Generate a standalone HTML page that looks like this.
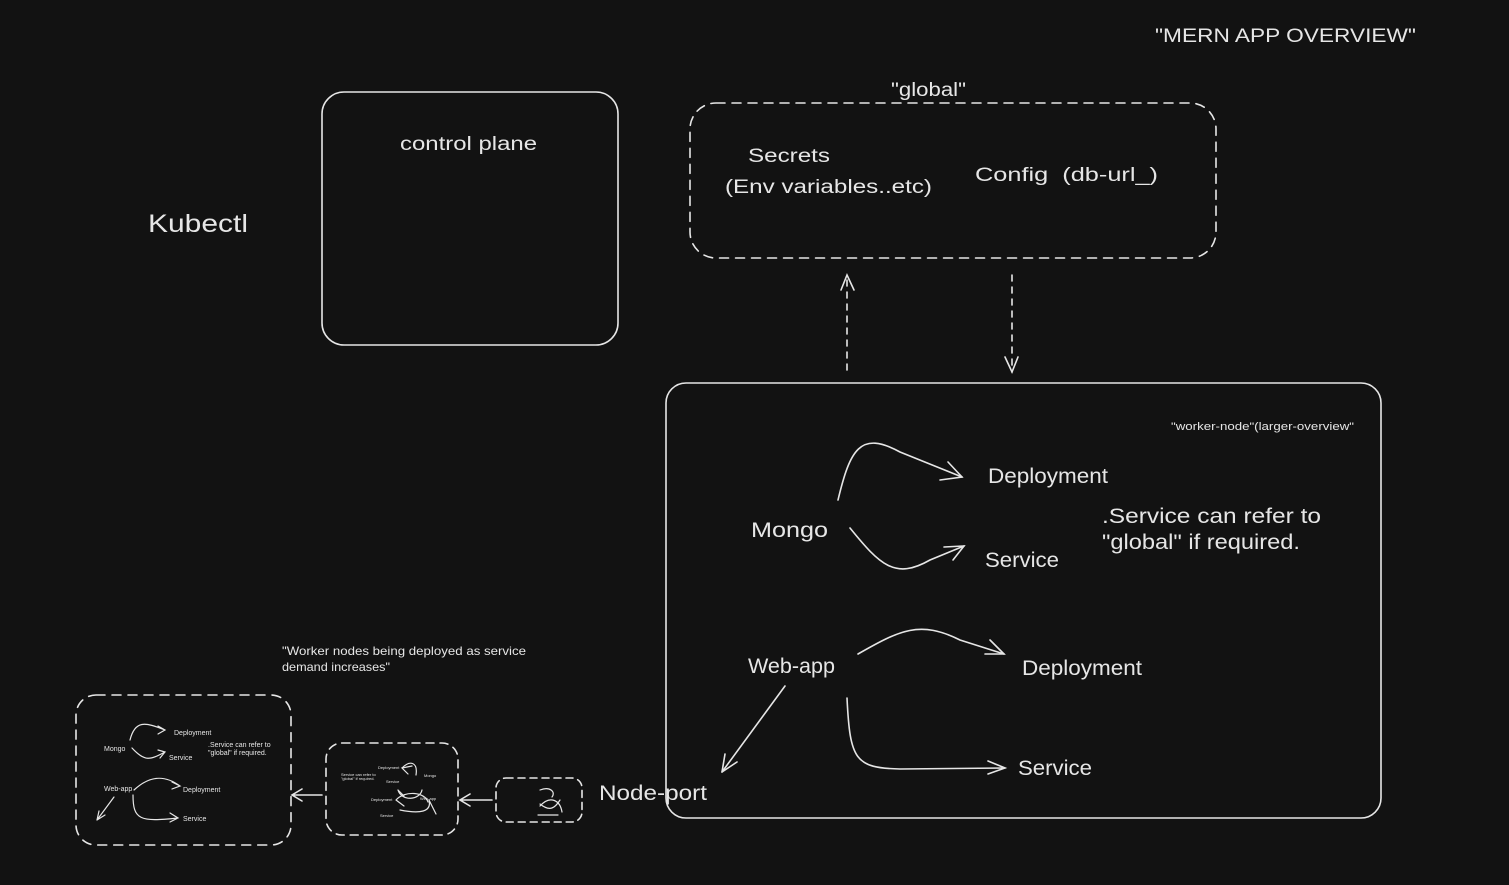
<!DOCTYPE html>
<html><head><meta charset="utf-8"><style>
html,body{margin:0;padding:0;background:#121212;}
svg{display:block}
text{font-family:"Liberation Sans",sans-serif;fill:#e6e6e6;}
</style></head><body>
<svg width="1509" height="885" viewBox="0 0 1509 885" xmlns="http://www.w3.org/2000/svg">
<rect width="1509" height="885" fill="#121212"/>
<g fill="none" stroke="#e6e6e6" stroke-width="1.6" stroke-linecap="round">
<rect x="322" y="92" width="296" height="253" rx="22"/>
<rect x="690" y="103" width="526" height="155" rx="26" stroke-dasharray="9 7"/>
<rect x="666" y="383" width="715" height="435" rx="20"/>
<path d="M847 370 L847 275" stroke-dasharray="6 6"/>
<path d="M841 290 L847 275 L854 290"/>
<path d="M1012 275 L1012 372" stroke-dasharray="6 6"/>
<path d="M1005 357 L1012 372 L1018 357"/>
<path d="M838 500 C850 450 860 430 900 452 L962 477"/>
<path d="M940 480 L962 477 L948 462"/>
<path d="M850 528 C880 565 895 580 930 560 L964 546"/>
<path d="M944 547 L964 546 L953 560"/>
<path d="M858 654 C900 630 920 620 960 640 L1004 654"/>
<path d="M985 654 L1004 654 L990 640"/>
<path d="M847 698 C850 760 855 768 900 769 L1005 768"/>
<path d="M988 761 L1005 768 L988 774"/>
<path d="M785 686 L722 772"/>
<path d="M722 772 L725 754 M722 772 L737 762"/>
<rect x="76" y="695" width="215" height="150" rx="20" stroke-dasharray="9 7"/>
<rect x="326" y="743" width="132" height="92" rx="16" stroke-dasharray="8 6"/>
<rect x="496" y="778" width="86" height="44" rx="10" stroke-dasharray="7 5"/>
<path d="M322 795 L292 795 M302 789 L292 795 L302 801"/>
<path d="M492 800 L460 800 M470 794 L460 800 L470 806"/>
<g stroke-width="1.2">
<path d="M130 740 C135 720 145 722 165 730 M158 726 L165 730 L158 734"/>
<path d="M132 748 C145 762 150 760 165 752 M158 750 L165 752 L160 758"/>
<path d="M134 790 C150 775 165 775 180 786 M172 782 L180 786 L172 789"/>
<path d="M133 795 C133 820 140 822 178 818 M170 813 L178 818 L170 822"/>
<path d="M114 797 L97 820 M97 820 L99 811 M97 820 L105 815"/>
<path d="M402 768 C410 760 418 762 416 775 M412 766 L402 768 L408 774"/>
<path d="M398 790 C402 802 420 800 422 790 M398 790 L404 796"/>
<path d="M396 800 C405 790 425 792 428 802 M396 800 L404 806"/>
<path d="M429 800 C432 812 420 814 400 810 M429 800 L436 814"/>
<path d="M540 790 C550 786 556 792 552 797 M540 804 C550 812 555 808 560 800 M540 806 C550 795 560 800 562 812 M538 815 L558 815"/>
</g>
</g>
<g>
<text x="1155" y="42" font-size="19" textLength="261" lengthAdjust="spacingAndGlyphs">"MERN APP OVERVIEW"</text>
<text x="891" y="96" font-size="19" textLength="75" lengthAdjust="spacingAndGlyphs">"global"</text>
<text x="400" y="150" font-size="19" textLength="137" lengthAdjust="spacingAndGlyphs">control plane</text>
<text x="148" y="232" font-size="25" textLength="100" lengthAdjust="spacingAndGlyphs">Kubectl</text>
<text x="748" y="162" font-size="19" textLength="82" lengthAdjust="spacingAndGlyphs">Secrets</text>
<text x="725" y="193" font-size="19" textLength="207" lengthAdjust="spacingAndGlyphs">(Env variables..etc)</text>
<text x="975" y="181" font-size="19" textLength="183" lengthAdjust="spacingAndGlyphs">Config &#160;(db-url_)</text>
<text x="1171" y="430" font-size="11" textLength="183" lengthAdjust="spacingAndGlyphs">"worker-node"(larger-overview"</text>
<text x="988" y="483" font-size="21" textLength="120" lengthAdjust="spacingAndGlyphs">Deployment</text>
<text x="751" y="537" font-size="21" textLength="77" lengthAdjust="spacingAndGlyphs">Mongo</text>
<text x="985" y="567" font-size="21" textLength="74" lengthAdjust="spacingAndGlyphs">Service</text>
<text x="1102" y="523" font-size="21" textLength="219" lengthAdjust="spacingAndGlyphs">.Service can refer to</text>
<text x="1102" y="549" font-size="21" textLength="198" lengthAdjust="spacingAndGlyphs">"global" if required.</text>
<text x="748" y="673" font-size="21" textLength="87" lengthAdjust="spacingAndGlyphs">Web-app</text>
<text x="1022" y="675" font-size="21" textLength="120" lengthAdjust="spacingAndGlyphs">Deployment</text>
<text x="1018" y="775" font-size="21" textLength="74" lengthAdjust="spacingAndGlyphs">Service</text>
<text x="599" y="800" font-size="21" textLength="108" lengthAdjust="spacingAndGlyphs">Node-port</text>
<text x="282" y="655" font-size="12" textLength="244" lengthAdjust="spacingAndGlyphs">"Worker nodes being deployed as service</text>
<text x="282" y="671" font-size="12" textLength="108" lengthAdjust="spacingAndGlyphs">demand increases"</text>
<text x="174" y="735" font-size="7">Deployment</text>
<text x="104" y="751" font-size="7">Mongo</text>
<text x="169" y="760" font-size="7">Service</text>
<text x="208" y="747" font-size="7">.Service can refer to</text>
<text x="208" y="755" font-size="7">"global" if required.</text>
<text x="104" y="791" font-size="7">Web-app</text>
<text x="183" y="792" font-size="7">Deployment</text>
<text x="183" y="821" font-size="7">Service</text>
<text x="378" y="769" font-size="4">Deployment</text>
<text x="341" y="776" font-size="4">Service can refer to</text>
<text x="341" y="780" font-size="4">"global" if required.</text>
<text x="386" y="783" font-size="4">Service</text>
<text x="424" y="777" font-size="4">Mongo</text>
<text x="371" y="801" font-size="4">Deployment</text>
<text x="420" y="800" font-size="4">Web-app</text>
<text x="380" y="817" font-size="4">Service</text>
</g>
</svg>
</body></html>
